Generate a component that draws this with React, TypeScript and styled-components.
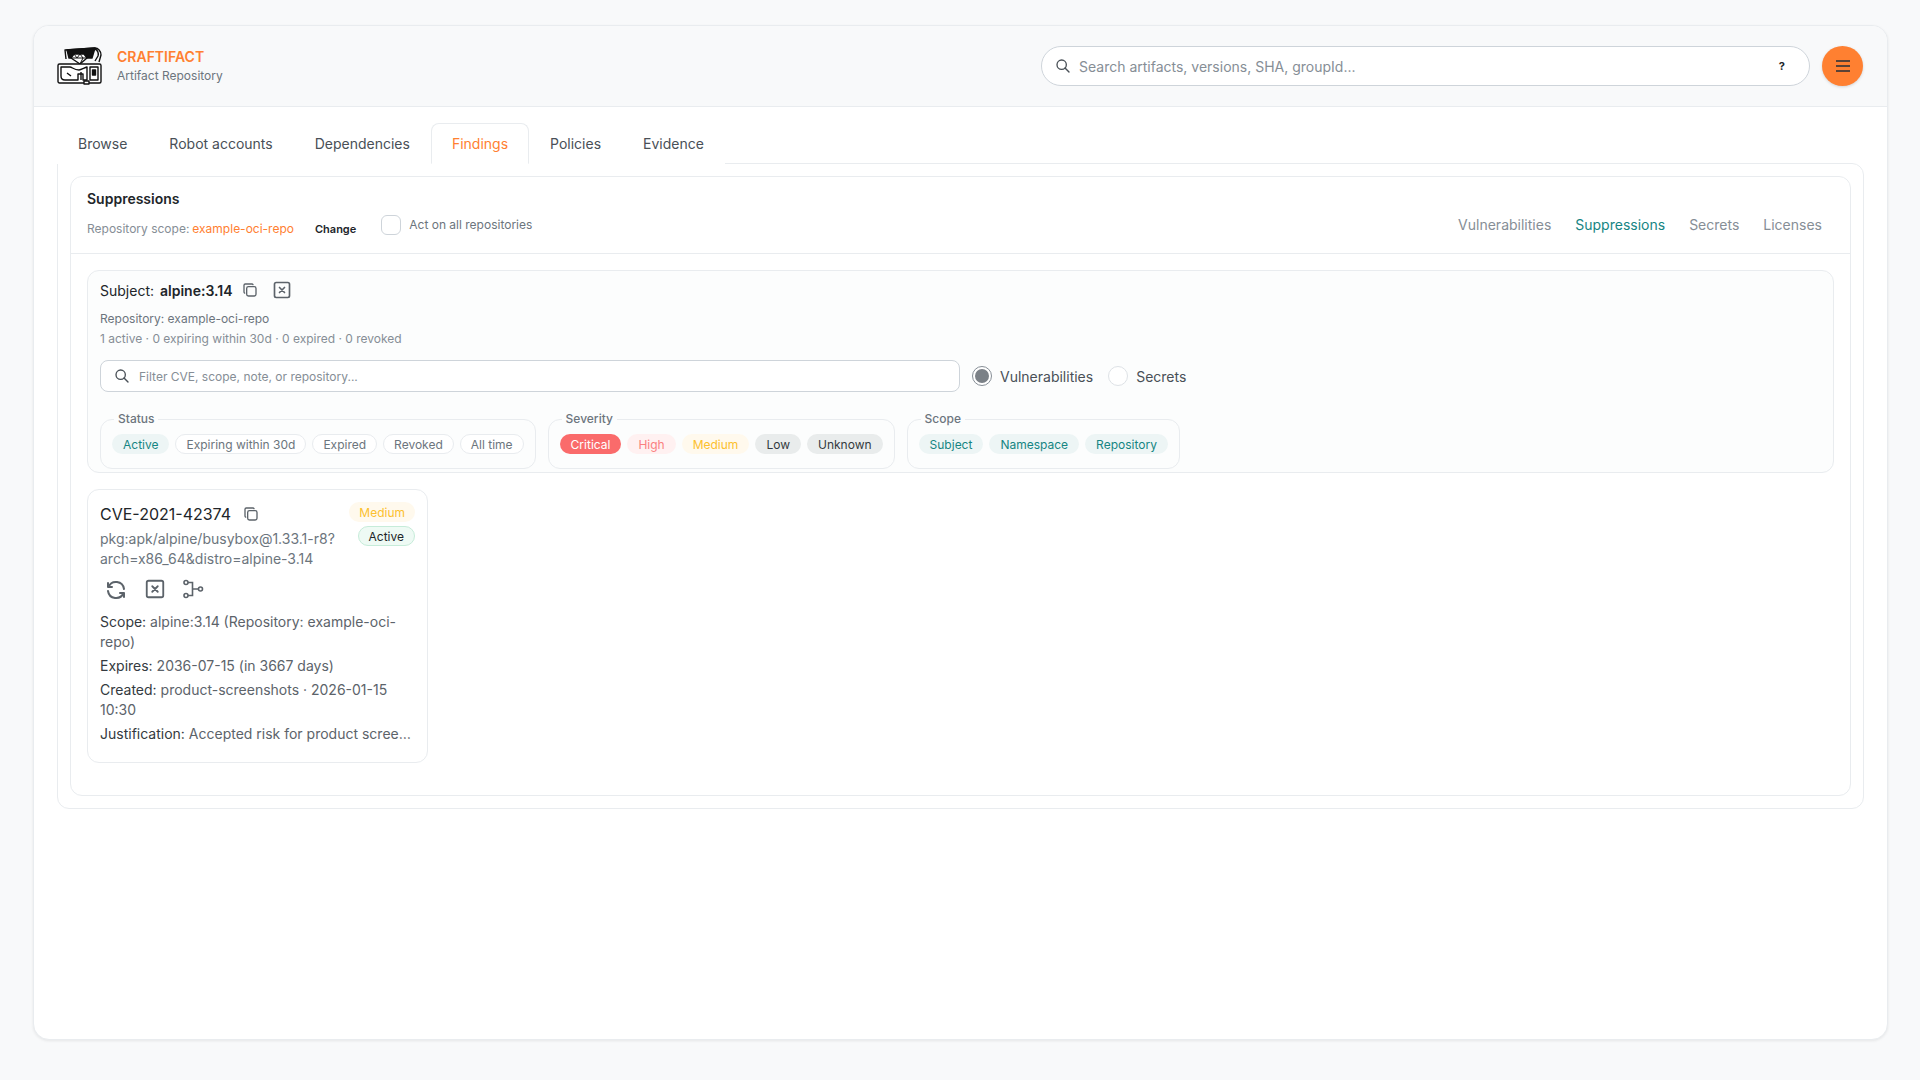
import * as React from 'react';
import styled, { createGlobalStyle } from 'styled-components';
import { TbCopy, TbRefresh, TbSearch, TbSquareX } from 'react-icons/tb';

const Global = createGlobalStyle`
    html, body { margin: 0; padding: 0; background: #f8f9fa; }
    body { font-family: Inter, "Liberation Sans", sans-serif; color: #212529; }
    * { box-sizing: border-box; }
`;

const Page = styled.div`
    width: 1920px;
    height: 1080px;
    padding: 25px 32px 40px 33px;
`;
const Shell = styled.div`
    height: 1015px;
    background: #fff;
    border: 1px solid #e9ecef;
    border-radius: 16px;
    box-shadow: 0 1px 3px rgba(0, 0, 0, 0.08);
    overflow: hidden;
`;
const Header = styled.header`
    height: 81px;
    background: #f8f9fa;
    border-bottom: 1px solid #e9ecef;
    display: flex;
    align-items: center;
    padding: 0 24px 0 23px;
`;
const Brand = styled.div`
    display: flex;
    align-items: center;
    gap: 14px;
`;
const BrandText = styled.div`
    display: flex;
    flex-direction: column;
    gap: 2px;
`;
const BrandName = styled.div`
    color: #ff8031;
    font-size: 14px;
    font-weight: 600;
    line-height: 18px;
`;
const BrandSub = styled.div`
    color: #6c757d;
    font-size: 12px;
    line-height: 16px;
`;
const HeaderRight = styled.div`
    margin-left: auto;
    display: flex;
    align-items: center;
    gap: 12px;
`;
const SearchBar = styled.div`
    width: 769px;
    height: 40px;
    background: #fff;
    border: 1px solid #ced4da;
    border-radius: 20px;
    display: flex;
    align-items: center;
    padding: 0 24px 0 13px;
    gap: 8px;
    color: #495057;
    font-size: 14px;
`;
const Placeholder = styled.span`
    color: #868e96;
`;
const Hint = styled.span`
    margin-left: auto;
    font-size: 11px;
    font-weight: 700;
    color: #212529;
`;
const MenuButton = styled.div`
    width: 41px;
    height: 40px;
    border-radius: 50%;
    background: #ff8031;
    box-shadow: 0 1px 3px rgba(0, 0, 0, 0.15);
    display: flex;
    align-items: center;
    justify-content: center;
`;
const Body = styled.div`
    padding: 16px 23px 0;
`;
const Tabs = styled.div`
    display: flex;
    height: 41px;
    padding-left: 0;
`;
const Tab = styled.div<{ $active?: boolean }>`
    height: 41px;
    padding: 0 20px;
    display: flex;
    align-items: center;
    font-size: 14px;
    color: ${p => (p.$active ? '#ff8031' : '#495057')};
    border: 1px solid ${p => (p.$active ? '#e9ecef' : 'transparent')};
    border-bottom-color: ${p => (p.$active ? '#fff' : 'transparent')};
    border-radius: 8px 8px 0 0;
    background: #fff;
    position: relative;
    z-index: 1;
`;
const Panel = styled.div`
    margin-top: -1px;
    height: 646px;
    border: 1px solid #e9ecef;
    border-radius: 0 12px 12px 12px;
    padding: 12px;
`;
const Card = styled.div`
    height: 620px;
    border: 1px solid #e9ecef;
    border-radius: 12px;
`;
const CardHead = styled.div`
    height: 77px;
    border-bottom: 1px solid #e9ecef;
    display: flex;
    justify-content: space-between;
    padding: 13px 28px 0 16px;
`;
const Title = styled.div`
    font-size: 14px;
    font-weight: 600;
    line-height: 18px;
`;
const ScopeRow = styled.div`
    margin-top: 9px;
    display: flex;
    align-items: center;
    font-size: 12px;
    color: #868e96;
    height: 22px;
`;
const ScopeLink = styled.span`
    color: #ff8031;
    margin-left: 3px;
`;
const ChangeLabel = styled.span`
    margin: 2px 0 0 21px;
    font-size: 11px;
    font-weight: 600;
    color: #212529;
`;
const CheckBox = styled.span`
    width: 20px;
    height: 20px;
    margin: 0 8px 0 25px;
    border: 1px solid #ced4da;
    border-radius: 6px;
    background: #fff;
    position: relative;
    top: -3px;
`;
const CheckText = styled.span`
    position: relative;
    top: -4px;
    color: #6c757d;
`;
const ViewLinks = styled.div`
    display: flex;
    gap: 24px;
    padding-top: 26px;
`;
const ViewLink = styled.span<{ $active?: boolean }>`
    font-size: 14px;
    line-height: 18px;
    color: ${p => (p.$active ? '#168583' : '#868e96')};
`;
const CardBody = styled.div`
    padding: 16px 16px 0 16px;
`;
const SubjectBox = styled.div`
    height: 203px;
    background: #fcfdfd;
    border: 1px solid #e9ecef;
    border-radius: 12px;
    padding: 0 12px;
`;
const SubjectRow = styled.div`
    display: flex;
    align-items: center;
    height: 38px;
    font-size: 14px;
    gap: 6px;
`;
const SubjectName = styled.b`
    font-weight: 600;
`;
const IconSlot = styled.span<{ $left?: number }>`
    display: inline-flex;
    color: #5c636a;
    margin-left: ${p => p.$left ?? 0}px;
`;
const Meta = styled.div`
    font-size: 12px;
    line-height: 20px;
    color: #6c757d;
`;
const MetaMuted = styled(Meta)`
    color: #868e96;
`;
const FilterRow = styled.div`
    margin-top: 11px;
    display: flex;
    align-items: center;
`;
const FilterInput = styled.div`
    width: 860px;
    height: 32px;
    background: #fff;
    border: 1px solid #ced4da;
    border-radius: 8px;
    display: flex;
    align-items: center;
    padding: 0 13px;
    gap: 9px;
    font-size: 12px;
    color: #868e96;
`;
const RadioItem = styled.label`
    display: flex;
    align-items: center;
    gap: 8px;
    font-size: 14px;
    color: #495057;
`;
const RadioGroup = styled.div`
    margin-left: 12px;
    display: flex;
    gap: 15px;
`;
const RadioDot = styled.span<{ $on?: boolean }>`
    width: 20px;
    height: 20px;
    border-radius: 50%;
    background: #fff;
    border: 1px solid ${p => (p.$on ? '#868e96' : '#dee2e6')};
    display: flex;
    align-items: center;
    justify-content: center;
    &::after {
        content: '';
        width: 14px;
        height: 14px;
        border-radius: 50%;
        background: ${p => (p.$on ? '#7b8187' : 'transparent')};
    }
`;
const Groups = styled.div`
    margin-top: 20px;
    display: flex;
    gap: 12px;
`;
const Group = styled.fieldset`
    margin: 0;
    height: 57px;
    padding: 0 11px 0 11px;
    border: 1px solid #e9ecef;
    border-radius: 12px;
    display: flex;
    gap: 6px;
    align-items: flex-start;
`;
const Legend = styled.legend`
    margin-left: 2px;
    padding: 0 4px;
    font-size: 12px;
    font-weight: 500;
    line-height: 14px;
    color: #6c757d;
`;
const chipColors = {
    tealOn: ['#edf5f5', '#168583', 'transparent'],
    off: ['#fff', '#6c757d', '#e9ecef'],
    red: ['#fa6b6b', '#fff', 'transparent'],
    pink: ['#fff1f1', '#fa8080', 'transparent'],
    amber: ['#fff9ed', '#fcc02e', 'transparent'],
    gray: ['#e9ecec', '#343a40', 'transparent'],
};
const Chip = styled.span<{ $kind: keyof typeof chipColors }>`
    height: 20px;
    margin-top: 8px;
    padding: 0 10px;
    border-radius: 10px;
    display: inline-flex;
    align-items: center;
    font-size: 12px;
    white-space: nowrap;
    background: ${p => chipColors[p.$kind][0]};
    color: ${p => chipColors[p.$kind][1]};
    border: 1px solid ${p => chipColors[p.$kind][2]};
`;
const CveCard = styled.div`
    margin-top: 16px;
    width: 341px;
    height: 274px;
    border: 1px solid #e9ecef;
    border-radius: 12px;
    padding: 12px;
    position: relative;
`;
const CveTitle = styled.div`
    display: flex;
    align-items: center;
    gap: 12px;
    font-size: 16px;
    line-height: 24px;
`;
const Pkg = styled.div`
    margin-top: 3px;
    width: 240px;
    font-size: 14px;
    line-height: 20px;
    color: #6c757d;
    word-break: break-all;
`;
const Badges = styled.div`
    position: absolute;
    top: 12px;
    right: 12px;
    display: flex;
    flex-direction: column;
    align-items: flex-end;
    gap: 4px;
`;
const SevBadge = styled.span`
    height: 20px;
    padding: 0 10px;
    border-radius: 10px;
    background: #fff9ed;
    color: #fcc02e;
    font-size: 12px;
    display: flex;
    align-items: center;
`;
const StateBadge = styled.span`
    height: 20px;
    padding: 0 10px;
    border-radius: 10px;
    background: #eefaf4;
    border: 1px solid #c6ecd9;
    color: #212529;
    font-size: 12px;
    display: flex;
    align-items: center;
`;
const Actions = styled.div`
    margin-top: 9px;
    display: flex;
    gap: 16px;
    padding-left: 4px;
    height: 24px;
    color: #5c636a;
`;
const Facts = styled.div`
    margin-top: 10px;
    display: flex;
    flex-direction: column;
    gap: 4px;
    font-size: 14px;
    line-height: 20px;
    color: #5c636a;
`;
const FactLabel = styled.span`
    color: #343a40;
`;
const FactClip = styled.div`
    white-space: nowrap;
    overflow: hidden;
    text-overflow: ellipsis;
`;

function ChestLogo() {
    return (
        <svg width="46" height="38" viewBox="0 0 46 38" fill="none" stroke="#111" strokeWidth="1.4" strokeLinejoin="round">
            <path d="M9 12 L8 3 L38 1 C41 1 44 4 44 8 L42 15" />
            <path d="M10 3 L38 1 L35 11 L12 11 Z" fill="#111" />
            <path d="M38 2 C40 3 42 5 41 9 L38 14" />
            <path d="M14 11 L17 7 L27 7 L30 11 L23 17 Z" fill="#fff" />
            <path d="M17 7 L20 11 L23 7 L26 11 L23 17 M14 11 L30 11" strokeWidth="1" />
            <rect x="1" y="17" width="43" height="19" rx="1.5" fill="#fff" />
            <path d="M4 20 H13 C15 20 17 23 22 23 C24 23 27 21 30 20 V33 H26 V27 H21 V33 H8 C5 33 4 31 4 29 Z" />
            <path d="M10 26 L14 29 M24 25 V33" />
            <rect x="33" y="20" width="8" height="13" />
            <rect x="35.5" y="23" width="3" height="5" fill="#111" />
            <rect x="27" y="34" width="5" height="3" fill="#fff" />
        </svg>
    );
}

function BranchIcon() {
    return (
        <svg width="22" height="22" viewBox="0 0 22 22" fill="none" stroke="currentColor" strokeWidth="1.6">
            <circle cx="4" cy="4.5" r="2" />
            <circle cx="4" cy="17.5" r="2" />
            <circle cx="18.5" cy="11" r="2" />
            <path d="M6 4.5 H10.5 V17.5 H6 M10.5 11 H16.5" />
        </svg>
    );
}

function App() {
    return (
        <Page>
            <Global />
            <Shell>
                <Header>
                    <Brand>
                        <ChestLogo />
                        <BrandText>
                            <BrandName>CRAFTIFACT</BrandName>
                            <BrandSub>Artifact Repository</BrandSub>
                        </BrandText>
                    </Brand>
                    <HeaderRight>
                        <SearchBar>
                            <TbSearch size={16} />
                            <Placeholder>Search artifacts, versions, SHA, groupId...</Placeholder>
                            <Hint>?</Hint>
                        </SearchBar>
                        <MenuButton>
                            <svg width="16" height="14" viewBox="0 0 16 14" stroke="#5a4236" strokeWidth="2">
                                <path d="M1 2 H15 M1 7 H15 M1 12 H15" />
                            </svg>
                        </MenuButton>
                    </HeaderRight>
                </Header>
                <Body>
                    <Tabs>
                        <Tab>Browse</Tab>
                        <Tab>Robot accounts</Tab>
                        <Tab>Dependencies</Tab>
                        <Tab $active>Findings</Tab>
                        <Tab>Policies</Tab>
                        <Tab>Evidence</Tab>
                    </Tabs>
                    <Panel>
                        <Card>
                            <CardHead>
                                <div>
                                    <Title>Suppressions</Title>
                                    <ScopeRow>
                                        Repository scope:<ScopeLink>example-oci-repo</ScopeLink>
                                        <ChangeLabel>Change</ChangeLabel>
                                        <CheckBox />
                                        <CheckText>Act on all repositories</CheckText>
                                    </ScopeRow>
                                </div>
                                <ViewLinks>
                                    <ViewLink>Vulnerabilities</ViewLink>
                                    <ViewLink $active>Suppressions</ViewLink>
                                    <ViewLink>Secrets</ViewLink>
                                    <ViewLink>Licenses</ViewLink>
                                </ViewLinks>
                            </CardHead>
                            <CardBody>
                                <SubjectBox>
                                    <SubjectRow>
                                        Subject: <SubjectName>alpine:3.14</SubjectName>
                                        <IconSlot $left={4}><TbCopy size={16} /></IconSlot>
                                        <IconSlot $left={8}><TbSquareX size={20} /></IconSlot>
                                    </SubjectRow>
                                    <Meta>Repository: example-oci-repo</Meta>
                                    <MetaMuted>1 active · 0 expiring within 30d · 0 expired · 0 revoked</MetaMuted>
                                    <FilterRow>
                                        <FilterInput>
                                            <TbSearch size={16} color="#495057" />
                                            Filter CVE, scope, note, or repository...
                                        </FilterInput>
                                        <RadioGroup>
                                            <RadioItem><RadioDot $on />Vulnerabilities</RadioItem>
                                            <RadioItem><RadioDot />Secrets</RadioItem>
                                        </RadioGroup>
                                    </FilterRow>
                                    <Groups>
                                        <Group>
                                            <Legend>Status</Legend>
                                            <Chip $kind="tealOn">Active</Chip>
                                            <Chip $kind="off">Expiring within 30d</Chip>
                                            <Chip $kind="off">Expired</Chip>
                                            <Chip $kind="off">Revoked</Chip>
                                            <Chip $kind="off">All time</Chip>
                                        </Group>
                                        <Group>
                                            <Legend>Severity</Legend>
                                            <Chip $kind="red">Critical</Chip>
                                            <Chip $kind="pink">High</Chip>
                                            <Chip $kind="amber">Medium</Chip>
                                            <Chip $kind="gray">Low</Chip>
                                            <Chip $kind="gray">Unknown</Chip>
                                        </Group>
                                        <Group>
                                            <Legend>Scope</Legend>
                                            <Chip $kind="tealOn">Subject</Chip>
                                            <Chip $kind="tealOn">Namespace</Chip>
                                            <Chip $kind="tealOn">Repository</Chip>
                                        </Group>
                                    </Groups>
                                </SubjectBox>
                                <CveCard>
                                    <CveTitle>
                                        CVE-2021-42374
                                        <IconSlot><TbCopy size={16} /></IconSlot>
                                    </CveTitle>
                                    <Pkg>pkg:apk/alpine/busybox@1.33.1-r8?arch=x86_64&amp;distro=alpine-3.14</Pkg>
                                    <Badges>
                                        <SevBadge>Medium</SevBadge>
                                        <StateBadge>Active</StateBadge>
                                    </Badges>
                                    <Actions>
                                        <TbRefresh size={24} />
                                        <TbSquareX size={22} />
                                        <BranchIcon />
                                    </Actions>
                                    <Facts>
                                        <div><FactLabel>Scope:</FactLabel> alpine:3.14 (Repository: example-oci-repo)</div>
                                        <div><FactLabel>Expires:</FactLabel> 2036-07-15 (in 3667 days)</div>
                                        <div><FactLabel>Created:</FactLabel> product-screenshots · 2026-01-15 10:30</div>
                                        <FactClip><FactLabel>Justification:</FactLabel> Accepted risk for product screenshots</FactClip>
                                    </Facts>
                                </CveCard>
                            </CardBody>
                        </Card>
                    </Panel>
                </Body>
            </Shell>
        </Page>
    );
}

export default App;
